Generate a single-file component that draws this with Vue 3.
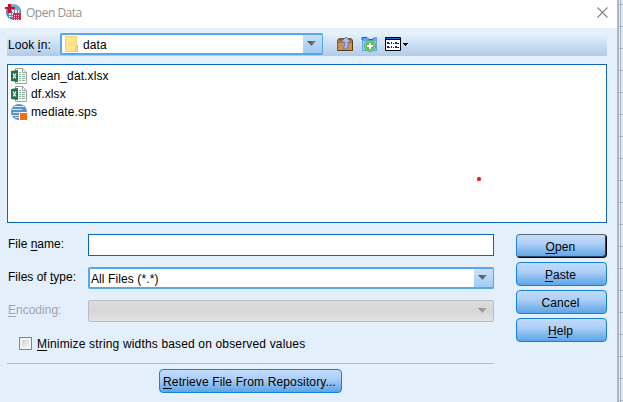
<script setup>
const files = [
  { name: 'clean_dat.xlsx', type: 'xlsx' },
  { name: 'df.xlsx', type: 'xlsx' },
  { name: 'mediate.sps', type: 'sps' },
]
const actions = [
  { key: 'O', rest: 'pen', primary: true },
  { key: 'P', rest: 'aste' },
  { key: '', rest: 'Cancel' },
  { key: 'H', rest: 'elp' },
]
</script>

<template>
  <div class="screen">
    <main class="dialog">
      <header class="titlebar">
        <svg class="app-icon" width="17" height="17" viewBox="0 0 17 17">
          <circle cx="8.500" cy="8" r="7.700" fill="#4f88bf" />
          <path d="M7 1q5-1 8 4v4H7z" fill="#78a9d6" />
          <path d="M4 6h10v3H8v4H4z" fill="#edf4fb" />
          <path d="M4 8h4v1H4zM4 11h4v1H4zM6 6h1v7H6zM9 6h1v3H9zM12 6h1v3h-1z" fill="#5a87b9" />
          <path d="M3 0h3v3h4v2H6v4H3V5H0V3h3z" fill="#c8102e" />
          <path d="M8 9h8v7H8z" fill="#d0284c" />
          <path d="M9 11h1v1H9zm2 0h1v1h-1zm2 0h1v1h-1zM9 13h1v1H9zm2 0h1v1h-1zm2 0h1v1h-1zM9 15h1v1H9zm2 0h1v1h-1zm2 0h1v1h-1z" fill="#f9cdd7" />
        </svg>
        <span class="title">Open Data</span>
        <svg class="close" width="11" height="11" viewBox="0 0 11 11"><path d="M.5.5l10 10M10.500.5l-10 10" fill="none" stroke="#858585" stroke-width="1.100" /></svg>
      </header>

      <div class="content">
        <div class="toolbar">
          <label class="look">Look <u>i</u>n:</label>
          <div class="combo folder-combo">
            <svg width="14" height="17" viewBox="0 0 14 17">
              <path d="M.5.5h11v15H.5z" fill="#ffe48f" stroke="#f2d070" />
              <path d="M10.500 15.500V11.500l2-2v6z" fill="#ffe79c" stroke="#e7bf50" />
            </svg>
            <span>data</span>
            <i class="arrow"></i>
          </div>
          <div class="tools">
            <svg width="17" height="16" viewBox="0 0 17 16">
              <path d="M0 4 2 2h12l2 2v11H0z" fill="#8a5a24" />
              <path d="M1 4h14v3H1z" fill="#a87436" />
              <path d="M1 7h14v7H1z" fill="#cb9150" />
              <path d="M1 14.500h14.500V5" fill="none" stroke="#5c3813" />
              <path d="m9 1 5 5h-3v3q0 4-5 4 2-2 1.500-7H4z" fill="#a9bcf2" stroke="#5d72b8" stroke-width=".8" />
            </svg>
            <svg width="17" height="17" viewBox="0 0 17 17">
              <path d="M1 1h5v2h10v12H1z" fill="#5aa8f5" />
              <path d="M1 4V1.500h5l2 2h3L13 2h3" fill="none" stroke="#1a55e0" />
              <path d="M2 5h13v9H2z" fill="#8fcffc" />
              <circle cx="9" cy="10" r="6" fill="#4fa64d" />
              <circle cx="9" cy="10" r="5.200" fill="#a8dba2" />
              <circle cx="9" cy="10" r="4.500" fill="#62b65f" />
              <path d="M8 7h2v2h2v2h-2v2H8v-2H6V9h2z" fill="#fff" />
            </svg>
            <svg width="24" height="15" viewBox="0 0 24 15">
              <path d="M.5.5h15v13H.5z" fill="#fff" stroke="#000" />
              <path d="M1 1h14v1H1z" fill="#1c70cf" />
              <path d="M0 2h16v1H0z" fill="#000" />
              <path d="M2 5h2v2H2zm4 0h1v2H6zm4 0h2v2h-2zM2 9h2v2H2zm4 0h1v2H6zm4 0h2v2h-2z" fill="#1d299c" />
              <path d="M4 6h1v1H4zm4 0h1v1H8zm4 0h2v1h-2zM4 10h1v1H4zm4 0h1v1H8zm4 0h2v1h-2z" fill="#222" />
              <path d="M18 6h5v1h-1v1h-1v1h-1V8h-1V7h-1z" fill="#000" />
            </svg>
          </div>
        </div>

        <section class="files">
          <div v-for="file in files" :key="file.name" class="file">
            <svg v-if="file.type === 'xlsx'" width="16" height="16" viewBox="0 0 16 16">
              <path d="M4.500.5h7l4 4v11h-11z" fill="#fff" stroke="#a0a0a0" />
              <path d="M11.500.5v4h4" fill="none" stroke="#a0a0a0" />
              <path d="M8 4h2v1H8zM8 6h2v1H8zm3 0h3v1h-3zM8 8h2v1H8zm3 0h3v1h-3zM8 10h2v1H8zm3 0h3v1h-3zM8 12h2v1H8zm3 0h3v1h-3z" fill="#85b697" />
              <path d="M0 3 7 2v12l-7-1z" fill="#207245" />
              <path d="m2 5.500 3 5M5 5.500l-3 5" stroke="#fff" stroke-width="1.200" />
            </svg>
            <svg v-else width="16" height="16" viewBox="0 0 16 16">
              <circle cx="8" cy="8" r="8" fill="#5b91c4" />
              <path d="M3 2.500h10M1 5.500h10M2 8.500h13M1 11.500h8M4 13.500h5" fill="none" stroke="#d9e8f5" />
              <path d="M8 8h8v8H8z" fill="#fff" />
              <path d="M9 9h7v7H9z" fill="#ff6b0b" />
            </svg>
            <span>{{ file.name }}</span>
          </div>
          <i class="pointer"></i>
        </section>

        <div class="lower">
          <div class="form">
            <div class="field"><label>File <u>n</u>ame:</label><input class="text-input" type="text"></div>
            <div class="field"><label>Files of <u>t</u>ype:</label><div class="combo"><span class="type-value">All Files (*.*)</span><i class="arrow"></i></div></div>
            <div class="field disabled"><label><u>E</u>ncoding:</label><div class="combo"><i class="arrow"></i></div></div>
            <div class="check"><i class="box"></i><label><u>M</u>inimize string widths based on observed values</label></div>
            <div class="rule"></div>
            <button class="btn repository"><span><u>R</u>etrieve File From Repository...</span></button>
          </div>
          <div class="actions">
            <button v-for="a in actions" :key="a.rest" class="btn" :class="{ primary: a.primary }"><span><u v-if="a.key">{{ a.key }}</u>{{ a.rest }}</span></button>
          </div>
        </div>
      </div>
    </main>
    <aside class="sheet"></aside>
  </div>
</template>

<style>
body { overflow: hidden; }
</style>
<style scoped>
* { box-sizing: border-box; }
.screen { width: 623px; height: 402px; display: flex; font: 12px/16px "Liberation Sans", Arial, sans-serif; color: #000; }
.dialog { width: 617px; height: 402px; background: #e3effb; }
svg { display: block; flex: none; }
u { text-underline-offset: 2px; text-decoration-thickness: 1px; }
.titlebar { height: 28px; background: #fff; display: flex; align-items: center; padding: 0 9px 4px 5px; }
.title { font: 12px/16px "Open Sans", sans-serif; color: #929292; margin: 2px auto 0 4px; letter-spacing: -.5px; }
.close { margin-top: 1px; }
.content { padding: 4px 10px 0 7px; }
.toolbar { height: 24px; display: flex; align-items: center; background: linear-gradient(#e9f3fd, #cfe1f4 45%, #b1cce7); }
.look { width: 53px; padding: 1px 0 0 1px; letter-spacing: .1px; }
.combo { height: 22px; border: 2px solid #58a6ec; border-width: 2px 1px 2px 2px; border-radius: 2px; background: #fff; display: flex; align-items: center; overflow: hidden; }
.folder-combo { width: 263px; padding-left: 3px; }
.folder-combo span { margin-left: 4px; padding-top: 1px; letter-spacing: .1px; }
.arrow { width: 19px; height: 22px; margin-left: auto; background: linear-gradient(#cfe4fa, #9bc8f4); display: flex; align-items: flex-start; padding: 8px 0 0 4px; flex: none; }
.arrow::before { content: ""; width: 9px; height: 5px; background: linear-gradient(100deg, #484c51, #7f8993); clip-path: polygon(0 0, 100% 0, 50% 100%); }
.tools { display: flex; align-items: center; margin-left: 14px; gap: 7px; }
.files { height: 159px; margin-top: 8px; border: 1px solid #0e66b8; background: #fff; padding: 2px 3px; position: relative; }
.file { height: 18px; display: flex; align-items: center; gap: 4px; letter-spacing: .12px; }
.pointer { position: absolute; left: 469px; top: 112px; width: 4px; height: 4px; border-radius: 1.5px; background: #ed1c24; }
.lower { display: flex; padding-top: 11px; justify-content: space-between; }
.form { width: 487px; }
.field { display: flex; height: 22px; margin-bottom: 11px; }
.field label { width: 81px; padding-left: 1px; line-height: 21px; white-space: nowrap; }
.field .combo { width: 406px; }
.text-input { width: 406px; height: 22px; border: 1px solid #0e66b8; background: #fff; padding: 0 2px; border-radius: 0; outline: 0; }
.type-value { margin-left: 1px; padding-top: 1px; letter-spacing: .1px; }
.disabled { color: #a1a5a9; }
.disabled .combo { border: 1px solid #b9bcc0; background: linear-gradient(#dcdcdc, #d6d6d6 48%, #e3e3e3); }
.disabled .arrow { background: none; }
.disabled .arrow::before { background: linear-gradient(100deg, #858585, #b3b3b3); }
.check { height: 20px; display: flex; align-items: center; letter-spacing: .16px; padding: 1px 0 0 12px; }
.box { width: 13px; height: 13px; border: 1px solid #858585; background: linear-gradient(135deg, #c5c5c5, #fff); box-shadow: inset 0 0 0 2px #f1f1f1; margin-right: 5px; }
.rule { height: 1px; background: #b9bdc1; margin-top: 10px; }
.btn { display: block; width: 91px; height: 24px; border: 1px solid #1680d8; border-radius: 4px; background: linear-gradient(#c1dcfc 0, #afd0f7 36%, #9bc5f2 54%, #88bbed 67%, #5ba6e9 100%); font: inherit; color: #000; padding: 2px 0 0; text-align: center; letter-spacing: .1px; }
.btn span { margin-right: 2px; }
.actions { display: grid; gap: 4px; align-content: start; }
.primary { border-color: #5f666e #000 #000 #287fc9; box-shadow: inset -1px -1px #294868; }
.repository { width: 183px; margin: 5px 0 0 152px; letter-spacing: .14px; }
.sheet { width: 6px; background: linear-gradient(90deg, #b7b7b9 0 2px, transparent 2px 3px, #9db7d4 3px 4px, transparent 4px), repeating-linear-gradient(#e6e7e9 0 4px, #9bb5d2 4px 5px, #e6e7e9 5px 22px); }
</style>
